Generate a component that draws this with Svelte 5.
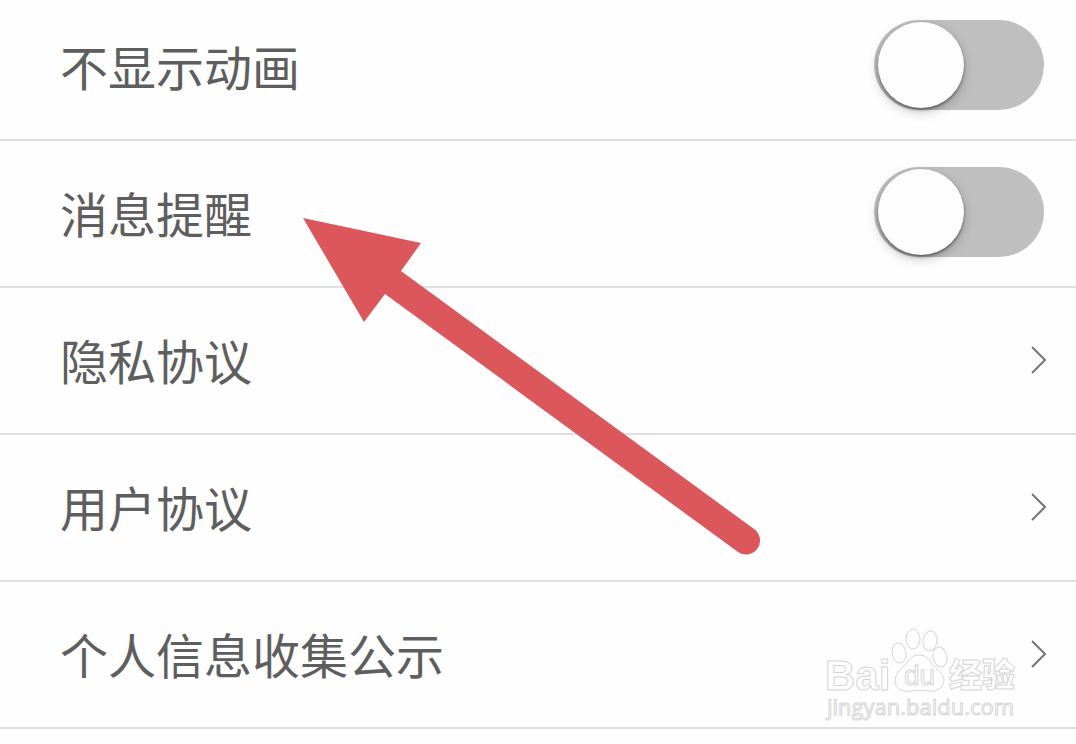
<script>
	let switches = $state([
		{ id: 'no-animation', label: '不显示动画', on: false },
		{ id: 'notify', label: '消息提醒', on: false }
	]);
	const links = [
		{ href: '#privacy', label: '隐私协议' },
		{ href: '#terms', label: '用户协议' },
		{ href: '#collect', label: '个人信息收集公示' }
	];
</script>

<main>
	<ul>
		{#each switches as item (item.id)}
			<li>
				<label class="row" for={item.id}>
					<span>{item.label}</span>
					<input type="checkbox" role="switch" id={item.id} bind:checked={item.on} />
				</label>
			</li>
		{/each}
		{#each links as item (item.href)}
			<li>
				<a class="row" href={item.href}>
					<span>{item.label}</span>
					<svg class="chevron" viewBox="0 0 16 28" aria-hidden="true">
						<path d="M2 2L15 15L2 28" />
					</svg>
				</a>
			</li>
		{/each}
	</ul>

	<svg class="arrow" viewBox="0 0 458 338" aria-hidden="true">
		<path d="M0 0L118 25L98 53L451 311A14 14 0 0 1 435 334L82 76L61 104Z" />
	</svg>

	<svg class="watermark" viewBox="0 0 200 100" aria-hidden="true">
		<g class="paw">
			<ellipse cx="77" cy="32" rx="7" ry="10" transform="rotate(-10 77 32)" />
			<ellipse cx="91" cy="18" rx="7" ry="10" />
			<ellipse cx="108" cy="20" rx="7" ry="10" transform="rotate(8 108 20)" />
			<ellipse cx="118" cy="36" rx="7" ry="10" transform="rotate(-12 118 36)" />
			<path d="M97 34C88 34 86 41 81 46C75 51 73 55 73 61C74 69 82 71 90 70C95 69 101 69 106 70C114 71 121 68 122 60C122 54 118 51 113 46C108 41 106 34 97 34Z" />
		</g>
		<text class="bai" x="3" y="69">Bai</text>
		<text class="du" x="82" y="64">du</text>
		<text class="jy" x="127" y="66">经验</text>
		<text class="url" x="5" y="94">jingyan.baidu.com</text>
	</svg>
</main>

<style>
	:global(body) {
		background: #fefefe;
	}
	main {
		position: relative;
		overflow: hidden;
		padding-bottom: 16px;
		font-family: 'Noto Sans CJK SC', sans-serif;
		color: #5e5e5e;
	}
	/* first row is scrolled slightly under the top edge */
	ul {
		list-style: none;
		margin: -6px 0 0;
		padding: 0;
	}
	li {
		border-bottom: 2px solid #dfdfdf;
	}
	.row {
		display: flex;
		box-sizing: border-box;
		align-items: center;
		justify-content: space-between;
		min-height: 145px;
		padding: 0 30px 4px 60px;
		color: inherit;
		text-decoration: none;
		font-size: 48px;
		line-height: 72px;
	}
	input {
		appearance: none;
		box-sizing: border-box;
		width: 170px;
		height: 90px;
		margin: 0 2px 0 0;
		padding: 2px 4px;
		border-radius: 45px;
		background: #bfbfbf;
	}
	input::before {
		content: '';
		display: block;
		width: 86px;
		height: 86px;
		border-radius: 50%;
		background: #fdfdfd;
		box-shadow: 0 2px 3px rgba(0, 0, 0, 0.4), 0 4px 12px rgba(0, 0, 0, 0.22);
		transition: margin 0.2s;
	}
	input:checked {
		background: #5cc66a;
	}
	input:checked::before {
		margin-left: 76px;
	}
	.chevron {
		width: 16px;
		height: 28px;
		overflow: visible;
		fill: none;
		stroke: #747474;
		stroke-width: 2;
	}
	.arrow {
		position: absolute;
		left: 303px;
		top: 218px;
		width: 458px;
		height: 338px;
		fill: #db575c;
		pointer-events: none;
	}
	.watermark {
		position: absolute;
		right: 54px;
		bottom: 24px;
		width: 200px;
		height: 100px;
		pointer-events: none;
		fill: #fefefe;
		stroke: #d6d6d6;
		stroke-width: 1;
	}
	.bai {
		font: bold 42px 'Liberation Sans', sans-serif;
	}
	.du {
		font: 28px 'Liberation Sans', sans-serif;
	}
	.jy {
		font: 900 33px 'Noto Sans CJK SC', sans-serif;
	}
	.url {
		font: 22px 'Open Sans', sans-serif;
	}
</style>
